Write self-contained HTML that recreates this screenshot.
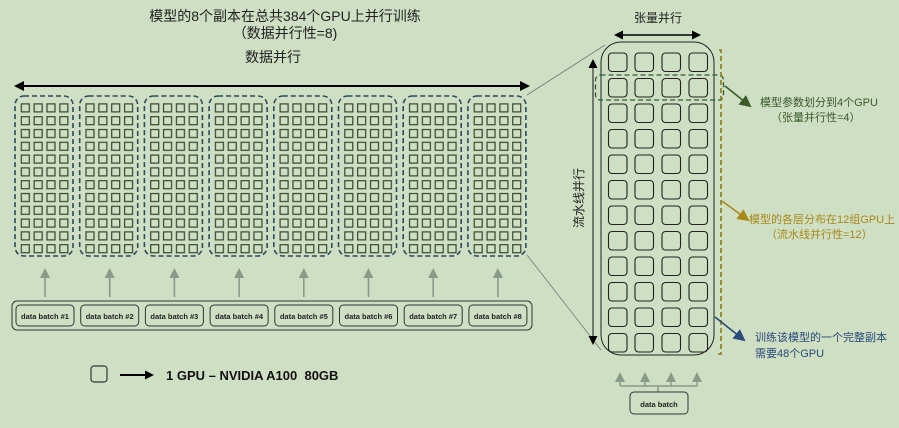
<!DOCTYPE html>
<html><head><meta charset="utf-8"><style>
html,body{margin:0;padding:0;background:#cedfc3;}
svg{display:block;font-family:"Liberation Sans","Noto Sans CJK SC",sans-serif;}
</style></head><body>
<svg width="899" height="428" viewBox="0 0 899 428" xmlns="http://www.w3.org/2000/svg">
<defs>
<pattern id="sq" x="20.7" y="103.3" width="12.85" height="12.8" patternUnits="userSpaceOnUse">
<rect x="0.6" y="0.6" width="8" height="8" fill="none" stroke="#36462f" stroke-width="1.2"/>
</pattern>
<marker id="ag" markerWidth="10" markerHeight="10" refX="8" refY="5" orient="auto" markerUnits="userSpaceOnUse"><path d="M0,0 L10,5 L0,10 z" fill="#8a9a88"/></marker>
<marker id="adg" markerWidth="12" markerHeight="12" refX="10" refY="6" orient="auto" markerUnits="userSpaceOnUse"><path d="M0,0 L12,6 L0,12 z" fill="#3a5a2a"/></marker>
<marker id="ay" markerWidth="12" markerHeight="12" refX="10" refY="6" orient="auto" markerUnits="userSpaceOnUse"><path d="M0,0 L12,6 L0,12 z" fill="#a8891a"/></marker>
<marker id="ab" markerWidth="12" markerHeight="12" refX="10" refY="6" orient="auto" markerUnits="userSpaceOnUse"><path d="M0,0 L12,6 L0,12 z" fill="#2a4a7a"/></marker>
<g id="grp">
<rect x="20" y="102.5" width="50" height="153" fill="url(#sq)"/>
<rect x="15" y="96" width="58" height="160" rx="9" fill="none" stroke="#2e4a5e" stroke-width="1.6" stroke-dasharray="5,3"/>
<line x1="45" y1="297" x2="45" y2="270" stroke="#8a9a88" stroke-width="1.6" marker-end="url(#ag)"/>
<rect x="16" y="305" width="58" height="21" rx="4" fill="none" stroke="#333" stroke-width="1"/>
</g>
</defs>

<text x="285" y="21" font-size="14" text-anchor="middle" fill="#222">模型的8个副本在总共384个GPU上并行训练</text>
<text x="285" y="38" font-size="14" text-anchor="middle" fill="#222">（数据并行性=8)</text>
<text x="273" y="62" font-size="14" text-anchor="middle" fill="#222">数据并行</text>
<line x1="20" y1="86" x2="523" y2="86" stroke="#000" stroke-width="2"/>
<path d="M14,86 L24,81 L24,91 z M530,86 L520,81 L520,91 z" fill="#000"/>

<g>
<use href="#grp"/>
<use href="#grp" transform="translate(64.7,0)"/>
<use href="#grp" transform="translate(129.4,0)"/>
<use href="#grp" transform="translate(194.1,0)"/>
<use href="#grp" transform="translate(258.8,0)"/>
<use href="#grp" transform="translate(323.5,0)"/>
<use href="#grp" transform="translate(388.2,0)"/>
<use href="#grp" transform="translate(452.9,0)"/>
</g>
<rect x="12" y="301" width="520" height="29" rx="5" fill="none" stroke="#333" stroke-width="1"/>
<g font-size="7.5" font-weight="bold" fill="#222" text-anchor="middle">
<text x="45" y="319">data batch #1</text>
<text x="109.7" y="319">data batch #2</text>
<text x="174.4" y="319">data batch #3</text>
<text x="239.1" y="319">data batch #4</text>
<text x="303.8" y="319">data batch #5</text>
<text x="368.5" y="319">data batch #6</text>
<text x="433.2" y="319">data batch #7</text>
<text x="497.9" y="319">data batch #8</text>
</g>

<rect x="91" y="366" width="16" height="16" rx="3" fill="none" stroke="#333" stroke-width="1.2"/>
<line x1="120" y1="375" x2="148" y2="375" stroke="#000" stroke-width="2"/>
<path d="M154,375 L145,370.5 L145,379.5 z" fill="#000"/>
<text x="166" y="380" font-size="13" font-weight="bold" fill="#111" xml:space="preserve">1 GPU – NVIDIA A100  80GB</text>

<line x1="527" y1="95" x2="605" y2="45" stroke="#777" stroke-width="0.8"/>
<line x1="527" y1="255" x2="601" y2="350" stroke="#777" stroke-width="0.8"/>

<text x="658" y="22" font-size="12" text-anchor="middle" fill="#222">张量并行</text>
<line x1="620" y1="35" x2="695" y2="35" stroke="#000" stroke-width="1.6"/>
<path d="M614,35 L623,30.5 L623,39.5 z M701,35 L692,30.5 L692,39.5 z" fill="#000"/>

<rect x="601" y="42" width="113" height="313" rx="20" fill="none" stroke="#222" stroke-width="1"/>
<g fill="none" stroke="#222" stroke-width="1.1">
<g id="row">
<rect x="608.5" y="53" width="18.5" height="18.5" rx="3.5"/>
<rect x="635" y="53" width="18.5" height="18.5" rx="3.5"/>
<rect x="662" y="53" width="18.5" height="18.5" rx="3.5"/>
<rect x="689" y="53" width="18.5" height="18.5" rx="3.5"/>
</g>
<use href="#row" transform="translate(0,25.5)"/>
<use href="#row" transform="translate(0,51)"/>
<use href="#row" transform="translate(0,76.5)"/>
<use href="#row" transform="translate(0,102)"/>
<use href="#row" transform="translate(0,127.5)"/>
<use href="#row" transform="translate(0,153)"/>
<use href="#row" transform="translate(0,178.5)"/>
<use href="#row" transform="translate(0,204)"/>
<use href="#row" transform="translate(0,229.5)"/>
<use href="#row" transform="translate(0,255)"/>
<use href="#row" transform="translate(0,280.5)"/>
</g>

<rect x="595.5" y="75" width="128" height="25" rx="5" fill="none" stroke="#2e5a2e" stroke-width="1.3" stroke-dasharray="5,3"/>
<path d="M719,50 L721,50 L721,354 L716,354" fill="none" stroke="#8a7a1a" stroke-width="1.6" stroke-dasharray="5,3"/>

<line x1="593" y1="340" x2="593" y2="66" stroke="#333" stroke-width="1.2"/>
<path d="M593,59 L588.5,68 L597.5,68 z M593,345 L588.5,336 L597.5,336 z" fill="#000"/>
<text transform="translate(583,198) rotate(-90)" font-size="12" text-anchor="middle" fill="#222">流水线并行</text>

<line x1="725" y1="86" x2="750" y2="106" stroke="#3a5a2a" stroke-width="1.6" marker-end="url(#adg)"/>
<text x="760" y="106" font-size="11" fill="#3a5a2a">模型参数划分到4个GPU</text>
<text x="771" y="121" font-size="11" fill="#3a5a2a">（张量并行性=4）</text>

<line x1="722" y1="201" x2="748" y2="220" stroke="#a8891a" stroke-width="1.6" marker-end="url(#ay)"/>
<text x="749" y="223" font-size="11" fill="#a8891a">模型的各层分布在12组GPU上</text>
<text x="766" y="238" font-size="11" fill="#a8891a">（流水线并行性=12）</text>

<line x1="715" y1="317" x2="744" y2="340" stroke="#2a4a7a" stroke-width="1.6" marker-end="url(#ab)"/>
<text x="755" y="341" font-size="11" fill="#2a4a7a">训练该模型的一个完整副本</text>
<text x="755" y="357" font-size="11" fill="#2a4a7a">需要48个GPU</text>

<g stroke="#8a9a88" stroke-width="1.5" fill="none">
<path d="M620,386 L697,386 M658,386 L658,392"/>
<line x1="620" y1="386" x2="620" y2="374" marker-end="url(#ag)"/>
<line x1="645" y1="386" x2="645" y2="374" marker-end="url(#ag)"/>
<line x1="671" y1="386" x2="671" y2="374" marker-end="url(#ag)"/>
<line x1="697" y1="386" x2="697" y2="374" marker-end="url(#ag)"/>
</g>
<rect x="630" y="392" width="58" height="22" rx="4" fill="none" stroke="#333" stroke-width="1"/>
<text x="659" y="407" font-size="7.5" font-weight="bold" text-anchor="middle" fill="#222">data batch</text>
</svg>
</body></html>
